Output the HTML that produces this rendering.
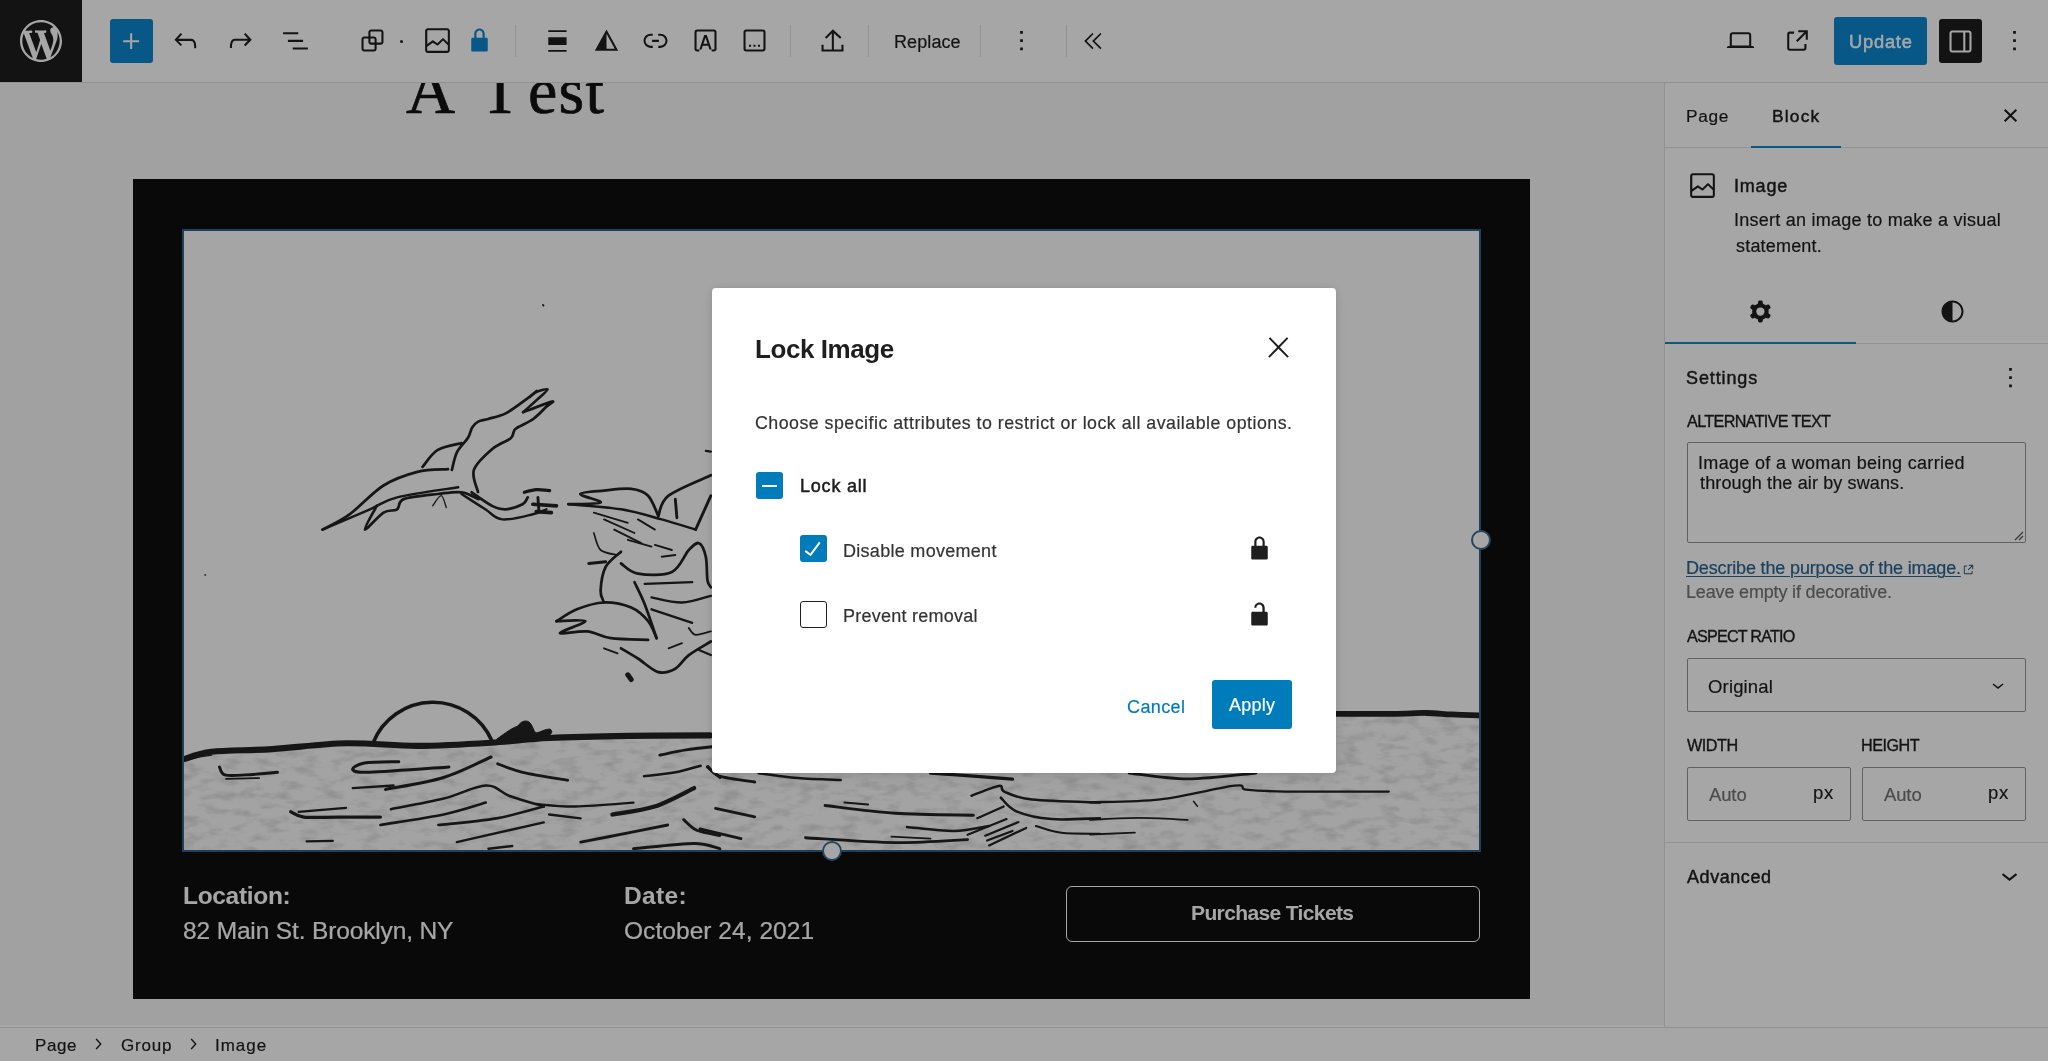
<!DOCTYPE html>
<html><head><meta charset="utf-8">
<style>
*{box-sizing:border-box;margin:0;padding:0}
html,body{width:2048px;height:1061px;overflow:hidden;background:#fff;-webkit-font-smoothing:antialiased;font-family:"Liberation Sans",sans-serif;color:#1e1e1e}
.a{position:absolute}
svg{display:block}
.ic{position:absolute;width:33px;height:33px}
.sep{position:absolute;top:25px;width:1px;height:32px;background:#e0e0e0}
.t{position:absolute;white-space:nowrap;line-height:1;will-change:transform}
#overlay{position:absolute;left:0;top:0;width:2048px;height:1061px;background:rgba(0,0,0,0.35)}
</style></head>
<body>
<div class="a" style="left:0;top:0;width:2048px;height:83px;background:#fff;border-bottom:1px solid #e0e0e0"><div class="a" style="left:0;top:0;width:82px;height:82px;background:#1e1e1e"><svg class="a" style="left:20px;top:20px" width="42" height="42" viewBox="0 0 20 20"><path fill="#fff" d="M20 10c0-5.51-4.49-10-10-10C4.48 0 0 4.490 0 10c0 5.52 4.48 10 10 10 5.51 0 10-4.48 10-10zM7.780 15.370L4.370 6.220c.55-.02 1.170-.08 1.170-.08.5-.06.44-1.130-.06-1.110 0 0-1.450.11-2.370.11-.18 0-.37 0-.58-.01C4.120 2.690 6.870 1.110 10 1.110c2.330 0 4.450.87 6.050 2.340-.68-.11-1.650.39-1.650 1.580 0 .74.45 1.360.9 2.100.35.61.55 1.360.55 2.460 0 1.490-1.400 5-1.400 5l-3.030-8.370c.54-.02.82-.17.82-.17.5-.05.44-1.250-.06-1.220 0 0-1.440.12-2.380.12-.87 0-2.330-.12-2.330-.12-.5-.03-.56 1.200-.06 1.220l.92.08 1.260 3.410zM17.410 10c.24-.64.74-1.870.43-4.250.7 1.290 1.050 2.710 1.050 4.250 0 3.290-1.730 6.240-4.400 7.780.97-2.590 1.940-5.200 2.920-7.780zM6.100 18.090C3.120 16.650 1.110 13.530 1.110 10c0-1.300.23-2.480.72-3.590C3.250 10.300 4.670 14.200 6.100 18.090zm4.030-6.630l2.580 6.980c-.86.29-1.760.45-2.710.45-.79 0-1.570-.11-2.290-.33.81-2.380 1.620-4.740 2.420-7.100z"/></svg></div>  <!-- plus -->
  <div class="a" style="left:110px;top:19px;width:43px;height:44px;background:#0c86cf;border-radius:3px">
    <svg class="a" style="left:5px;top:5.5px" width="33" height="33" viewBox="0 0 24 24"><path fill="#fff" d="M11 12.5V17.5H12.5V12.5H17.5V11H12.5V6H11V11H6V12.5H11Z"/></svg>
  </div>
  <svg class="ic" style="left:169px;top:24px" viewBox="0 0 24 24"><path fill="#1e1e1e" d="M18.3 11.7c-.6-.6-1.4-.9-2.3-.9H6.7l2.9-3.3-1.1-1-4.5 5L8.5 16l1-1-2.7-2.7H16c.5 0 .9.2 1.3.5 1 1 1 3.4 1 4.5v.3h1.5v-.2c0-1.5 0-4.3-1.5-5.7z"/></svg>
  <svg class="ic" style="left:224px;top:24px" viewBox="0 0 24 24"><path fill="#1e1e1e" d="M15.6 6.5l-1.1 1 2.9 3.3H8c-.9 0-1.7.3-2.3.9-1.4 1.5-1.4 4.2-1.4 5.6v.2h1.5v-.3c0-1.1 0-3.5 1-4.5.3-.3.7-.5 1.300-.5h9.2L14.5 15l1.1 1.1 4.6-4.6-4.6-5z"/></svg>
  <svg class="ic" style="left:279px;top:24px" viewBox="0 0 24 24"><path fill="#1e1e1e" d="M3 6h11v1.5H3V6Zm3.5 5.5h11V13h-11v-1.5ZM21 17H10v1.5h11V17Z"/></svg>
  <!-- group parent -->
  <svg class="ic" style="left:356px;top:24px" viewBox="0 0 24 24"><path fill="#1e1e1e" d="M18 4h-7c-1.1 0-2 .9-2 2v3H6c-1.1 0-2 .9-2 2v7c0 1.1.9 2 2 2h7c1.1 0 2-.9 2-2v-3h3c1.1 0 2-.9 2-2V6c0-1.1-.9-2-2-2zm-4.5 14c0 .3-.2.5-.5.5H6c-.3 0-.5-.2-.5-.5v-7c0-.3.2-.5.5-.5h3V13c0 1.1.9 2 2 2h2.5v3zm0-4.5H11c-.3 0-.5-.2-.5-.5v-2.5H13c.3 0 .5.2.5.5v2.5zm5-.5c0 .3-.2.5-.5.5h-3V11c0-1.1-.9-2-2-2h-2.5V6c0-.3.2-.5.5-.5h7c.3 0 .5.2.5.5v7z"/></svg>
  <div class="a" style="left:400px;top:40px;width:3px;height:3px;border-radius:50%;background:#1e1e1e"></div>
  <svg class="ic" style="left:421px;top:24px" viewBox="0 0 24 24"><path fill="#1e1e1e" d="M19 3H5c-1.100 0-2 .9-2 2v14c0 1.100.9 2 2 2h14c1.100 0 2-.9 2-2V5c0-1.100-.9-2-2-2zM5 4.5h14c.3 0 .5.2.5.5v8.4l-3-2.9c-.3-.3-.8-.3-1 0L11.9 14 9 12c-.3-.2-.6-.2-.8 0l-3.6 2.6V5c-.1-.3.1-.5.4-.5zm14 15H5c-.3 0-.5-.2-.5-.5v-2.4l4.1-3 3 1.9c.3.2.7.2.9-.1L16 12l3.5 3.4V19c0 .3-.2.5-.5.5z"/></svg>
  <svg class="ic" style="left:463px;top:24px" viewBox="0 0 24 24"><path fill="#0c86cf" d="M17 10h-1.2V7c0-2.1-1.7-3.8-3.8-3.8-2.1 0-3.8 1.7-3.8 3.8v3H7c-.6 0-1 .4-1 1v8c0 .6.4 1 1 1h10c.6 0 1-.4 1-1v-8c0-.6-.4-1-1-1zm-2.8 0H9.8V7c0-1.2 1-2.2 2.2-2.2s2.2 1 2.2 2.2v3z"/></svg>
  <div class="sep" style="left:515px"></div>
  <!-- align -->
  <svg class="ic" style="left:541px;top:24px" viewBox="0 0 24 24"><path fill="#1e1e1e" d="M5.3 4.5h13.3v1.3H5.3zM5.3 9.7h13.3v5.6H5.3zM5.3 18.9h13.3v1.3H5.3z"/></svg>
  <!-- duotone -->
  <svg class="ic" style="left:590px;top:24px" viewBox="0 0 24 24"><path fill="#1e1e1e" d="M12 4 3.5 19.5h17Zm0 3.1 6 10.9h-6Z" fill-rule="evenodd"/></svg>
  <!-- link -->
  <svg class="ic" style="left:639px;top:24px" viewBox="0 0 24 24"><path fill="#1e1e1e" d="M10 17.389H8.444A5.194 5.194 0 1 1 8.444 7H10v1.5H8.444a3.694 3.694 0 0 0 0 7.389H10v1.5ZM14 7h1.556a5.194 5.194 0 0 1 0 10.39H14v-1.5h1.556a3.694 3.694 0 0 0 0-7.39H14V7Zm-4.5 6h5v-1.5h-5V13Z"/></svg>
  <!-- text overlay -->
  <svg class="ic" style="left:689px;top:24px" viewBox="0 0 24 24"><path fill="#1e1e1e" d="M6 4h12a2 2 0 0 1 2 2v12a2 2 0 0 1-2 2h-1.5v-1.5H18a.5.5 0 0 0 .5-.5V6a.5.5 0 0 0-.5-.5H6a.5.5 0 0 0-.5.5v12c0 .3.2.5.5.5h1.5V20H6a2 2 0 0 1-2-2V6a2 2 0 0 1 2-2Zm5.1 4h1.8l3.6 10.5h-1.6l-.9-2.7H10l-.9 2.7H7.5Zm.9 2-1.5 4.4h3Z"/></svg>
  <!-- caption -->
  <svg class="ic" style="left:738px;top:24px" viewBox="0 0 24 24"><path fill="#1e1e1e" d="M6 4h12a2 2 0 0 1 2 2v12a2 2 0 0 1-2 2H6a2 2 0 0 1-2-2V6a2 2 0 0 1 2-2Zm0 1.5a.5.5 0 0 0-.5.5v12c0 .3.2.5.5.5h12a.5.5 0 0 0 .5-.5V6a.5.5 0 0 0-.5-.5ZM8 15h1.5v1.5H8Zm3.25 0h1.5v1.5h-1.5Zm3.25 0H16v1.5h-1.5Z"/></svg>
  <div class="sep" style="left:790px"></div>
  <!-- upload -->
  <svg class="ic" style="left:816px;top:24px" viewBox="0 0 24 24"><path fill="#1e1e1e" d="M18.5 15v3.5H13V6.7l4.5 4.1 1-1.1-6.2-5.8-5.8 5.8 1 1.1 4-4v11.7h-6V15H4v5h16v-5z"/></svg>
  <div class="sep" style="left:868px"></div>
  <div class="sep" style="left:980px"></div>
  <svg class="ic" style="left:1005px;top:24px" viewBox="0 0 24 24"><path fill="#1e1e1e" d="M13 19h-2v-2h2v2zm0-6h-2v-2h2v2zm0-6h-2V5h2v2z"/></svg>
  <div class="sep" style="left:1066px"></div>
  <svg class="ic" style="left:1077px;top:24px" viewBox="0 0 24 24"><path fill="none" stroke="#1e1e1e" stroke-width="1.25" d="M11.6 6.9 6.1 12.4l5.5 5.5M17.4 6.9 11.9 12.4l5.5 5.5"/></svg>

  <!-- right side -->
  <svg class="ic" style="left:1724px;top:24px" viewBox="0 0 24 24"><path fill="#1e1e1e" d="M20.5 16h-.7V8c0-1.100-.9-2-2-2H6.200c-1.100 0-2 .9-2 2v8h-.7c-.8 0-1.500.7-1.500 1.500h20c0-.8-.7-1.500-1.500-1.500zM5.700 8c0-.3.2-.5.5-.5h11.600c.3 0 .5.2.5.5v7.600H5.700V8z"/></svg>
  <svg class="ic" style="left:1781px;top:24px" viewBox="0 0 24 24"><path fill="#1e1e1e" d="M19.5 4.5h-7V6h4.44l-5.97 5.97 1.06 1.06L18 7.06v4.44h1.5v-7Zm-13 1a2 2 0 0 0-2 2v10a2 2 0 0 0 2 2h10a2 2 0 0 0 2-2v-3H17v3a.5.5 0 0 1-.5.5h-10a.5.5 0 0 1-.5-.5v-10a.5.5 0 0 1 .5-.5h3V5.5h-3Z"/></svg>
  <div class="a" style="left:1834px;top:17px;width:93px;height:48px;background:#0c86cf;border-radius:3px"></div>
  <div class="a" style="left:1939px;top:19px;width:43px;height:44px;background:#1e1e1e;border-radius:3px">
    <svg class="a" style="left:5px;top:5.5px" width="33" height="33" viewBox="0 0 24 24"><path fill="#fff" d="M18 4H6c-1.100 0-2 .9-2 2v12c0 1.100.9 2 2 2h12c1.100 0 2-.9 2-2V6c0-1.100-.9-2-2-2zm-4 14.5H6c-.3 0-.5-.2-.5-.5V6c0-.3.2-.5.5-.5h8v13zm4.500-.5c0 .3-.2.5-.5.5h-2.500v-13H18c.3 0 .5.2.5.5v12z"/></svg>
  </div>
  <svg class="ic" style="left:1998px;top:24px" viewBox="0 0 24 24"><path fill="#1e1e1e" d="M13 19h-2v-2h2v2zm0-6h-2v-2h2v2zm0-6h-2V5h2v2z"/></svg>
<div class="t" style="left:893.56px;top:32.96px;font-size:18.00px;letter-spacing:0.092px;color:#1e1e1e;-webkit-text-stroke:0.20px #1e1e1e">Replace</div><div class="t" style="left:1848.72px;top:33.41px;font-size:18.30px;letter-spacing:0.786px;color:#fff;-webkit-text-stroke:0.50px #fff">Update</div></div>
<div class="a" style="left:0;top:83px;width:1664px;height:942px;background:#f8f8f8;overflow:hidden"><div class="t" style="left:406px;top:-27px;font-family:'Liberation Serif',serif;font-size:68px;color:#111;-webkit-text-stroke:0.7px #111">A</div><div class="t" style="left:480px;top:-25.3px;font-family:'Liberation Serif',serif;font-size:66px;color:#111;-webkit-text-stroke:0.7px #111">T</div><div class="t" style="left:528px;top:-25.3px;font-family:'Liberation Serif',serif;font-size:66px;color:#111;-webkit-text-stroke:0.7px #111;letter-spacing:1.2px">est</div></div><div class="a" style="left:133px;top:179px;width:1397px;height:820px;background:#0f0f0f"></div><div class="a" style="left:184px;top:231px;width:1295px;height:619px;outline:2px solid #2a6490;overflow:hidden"><svg class="a" style="left:-1px;top:-1px" width="1297" height="621" viewBox="183 230 1297 621"><rect x="183" y="230" width="1297" height="621" fill="#fefefe"/><defs><filter id="nz" x="0" y="0" width="100%" height="100%"><feTurbulence type="fractalNoise" baseFrequency="0.05 0.12" numOctaves="3" seed="7"/><feColorMatrix values="0 0 0 0 0  0 0 0 0 0  0 0 0 0 0  0 0 0 -0.3 0.16"/></filter></defs><path d="M183 758 C260 748 330 745 346 743 C420 748 500 745 560 740 C650 737 720 735 900 730 L1336 714 L1480 716 L1480 851 L183 851Z" fill="#fafafa"/><rect x="183" y="712" width="1297" height="140" filter="url(#nz)" clip-path="url(#oc)"/><clipPath id="oc"><path d="M183 758 C260 748 330 745 346 743 C420 748 500 745 560 740 C650 737 720 735 900 730 L1336 714 L1480 716 L1480 851 L183 851Z"/></clipPath><g fill="none" stroke="#222" stroke-linecap="round" stroke-linejoin="round"><path d="M451.9 469.9C452.8 466.9 454.3 457.5 457.0 452.1C459.7 446.7 465.5 441.8 468.0 437.7C470.5 433.6 470.5 430.2 472.2 427.5C473.9 424.8 475.5 423.0 478.2 421.6C480.9 420.2 483.6 420.4 488.3 419.0C493.0 417.6 500.1 416.2 506.2 413.1C512.3 410.0 519.7 404.1 524.8 400.4C529.9 396.7 534.7 392.6 536.7 391.0" stroke-width="2.74"/>
<path d="M529.9 397.0C531.0 396.1 533.7 393.2 536.7 391.9C539.7 390.6 547.1 388.4 547.7 389.3C548.3 390.2 544.2 393.2 540.1 397.0C536.0 400.8 525.9 409.7 523.1 412.2" stroke-width="2.46"/>
<path d="M523.1 412.2C527.9 410.4 548.2 402.5 552.0 401.6C555.8 400.8 549.1 404.2 546.0 407.1C542.9 410.0 538.2 415.5 533.3 419.0C528.3 422.5 519.5 426.2 516.3 428.3C513.0 430.4 514.8 430.0 513.8 431.7C512.8 433.4 513.9 435.7 510.4 438.5C506.9 441.3 498.7 443.5 492.6 448.7C486.5 453.9 476.3 462.7 473.9 469.9C471.5 477.1 477.3 488.3 478.0 492.0" stroke-width="2.74"/>
<path d="M422.5 466.9C425.1 464.0 431.3 453.8 437.8 449.9C444.3 445.9 457.6 444.2 461.5 443.1" stroke-width="2.74"/>
<path d="M322.5 529.6C327.0 527.1 339.4 521.7 349.6 514.3C359.8 507.0 372.2 492.6 383.5 485.5C394.8 478.4 406.7 474.7 417.4 471.9C428.2 469.2 442.9 469.7 448.0 469.2" stroke-width="2.74"/>
<path d="M322.5 529.6C330.4 526.2 357.5 514.6 370.0 509.3C382.4 503.9 382.4 501.1 397.1 497.4C411.8 493.7 448.0 488.9 458.2 487.2" stroke-width="2.46"/>
<path d="M376.7 505.9C374.8 509.8 363.7 528.5 364.9 529.6C366.0 530.7 378.2 516.0 383.5 512.6C388.9 509.3 393.7 511.5 397.1 509.3C400.5 507.0 397.1 501.6 403.9 499.1C410.7 496.5 428.2 495.1 437.8 494.0C447.4 492.9 454.8 491.4 461.5 492.3C468.3 493.1 475.7 497.9 478.5 499.1" stroke-width="2.74"/>
<path d="M471.7 492.3C475.1 494.6 486.4 503.0 492.1 505.9C497.7 508.7 500.6 509.5 505.6 509.3C510.7 509.0 518.9 506.1 522.6 504.2C526.3 502.2 526.8 498.5 527.7 497.4" stroke-width="2.74"/>
<path d="M461.5 494.0C465.5 496.5 478.5 505.0 485.3 509.3C492.1 513.5 494.3 518.6 502.3 519.4C510.2 520.3 525.4 516.0 532.8 514.3C540.1 512.6 544.1 510.1 546.4 509.3" stroke-width="2.46"/>
<path d="M524.3 492.3C526.3 491.8 531.9 489.9 536.2 489.6C540.4 489.3 547.5 490.4 549.7 490.6" stroke-width="3.24"/>
<path d="M532.8 504.2L556.5 505.9" stroke-width="3.60"/>
<path d="M536.2 511.6L551.4 512.6" stroke-width="3.60"/>
<path d="M537.9 497.4L538.9 510.9" stroke-width="2.88"/>
<path d="M432.7 505.9C434.1 504.2 438.9 495.4 441.2 495.7C443.5 496.0 445.4 505.6 446.3 507.6" stroke-width="1.30"/>
<path d="M568.4 504.2C573.8 503.9 598.6 504.2 600.6 502.5C602.6 500.8 579.7 496.0 580.3 494.0C580.8 492.0 595.5 491.4 604.0 490.6C612.5 489.7 623.8 488.1 631.2 488.9C638.5 489.7 643.6 491.2 648.1 495.7C652.6 500.2 656.6 512.6 658.3 516.0" stroke-width="2.74"/>
<path d="M568.4 504.2C577.2 505.0 605.4 506.7 621.0 509.3C636.5 511.8 649.2 516.0 661.7 519.4C674.1 522.8 690.0 527.9 695.6 529.6" stroke-width="2.46"/>
<path d="M658.3 516.0C660.0 512.6 659.7 502.5 668.5 495.7C677.2 488.9 703.8 478.7 710.9 475.3" stroke-width="2.74"/>
<path d="M675.3 499.1L676.9 517.7" stroke-width="2.88"/>
<path d="M695.6 529.6L710.9 495.7" stroke-width="2.88"/>
<path d="M593.8 512.6L627.8 522.8" stroke-width="1.87"/>
<path d="M604.0 519.4L634.5 533.0" stroke-width="1.87"/>
<path d="M614.2 529.6L641.3 543.2" stroke-width="1.87"/>
<path d="M627.8 539.8L651.5 546.6" stroke-width="1.87"/>
<path d="M637.9 519.4L654.9 529.6" stroke-width="1.87"/>
<path d="M654.9 544.9L671.9 550.0" stroke-width="1.87"/>
<path d="M661.7 556.7L675.3 555.0" stroke-width="1.87"/>
<path d="M593.8 533.0C595.0 535.8 596.7 546.3 600.6 550.0C604.6 553.6 614.8 554.2 617.6 555.0" stroke-width="1.73"/>
<path d="M588.8 563.5L605.7 561.8" stroke-width="2.88"/>
<path d="M621.0 551.7C618.4 554.2 609.1 560.4 605.7 566.9C602.3 573.4 600.9 584.7 600.6 590.7C600.3 596.6 603.5 600.6 604.0 602.5" stroke-width="2.74"/>
<path d="M621.0 563.5C623.8 565.2 629.5 572.3 637.9 573.7C646.4 575.1 663.4 576.0 671.9 572.0C680.3 568.1 684.3 554.8 688.8 550.0C693.3 545.2 696.2 542.0 699.0 543.2C701.8 544.3 704.4 550.5 705.8 556.7C707.2 563.0 706.6 575.4 707.5 580.5C708.3 585.6 710.3 586.1 710.9 587.3" stroke-width="2.74"/>
<path d="M634.5 582.2C636.2 585.9 641.0 594.9 644.7 604.2C648.4 613.6 654.6 632.5 656.6 638.2" stroke-width="2.74"/>
<path d="M644.7 583.9L692.2 582.2" stroke-width="2.30"/>
<path d="M651.5 597.4C656.6 598.3 672.1 602.8 682.0 602.5C691.9 602.3 706.1 596.9 710.9 595.8" stroke-width="2.30"/>
<path d="M651.5 609.3L692.2 622.9" stroke-width="2.30"/>
<path d="M556.5 621.2C559.9 619.2 569.0 612.4 576.9 609.3C584.8 606.2 595.0 602.8 604.0 602.5C613.1 602.3 623.8 604.5 631.2 607.6C638.5 610.7 643.9 616.1 648.1 621.2C652.4 626.3 655.2 635.3 656.6 638.2" stroke-width="2.74"/>
<path d="M556.5 621.2C561.3 621.2 584.8 619.2 585.4 621.2C585.9 623.2 559.6 631.4 559.9 633.1C560.2 634.8 578.6 630.5 587.1 631.4C595.5 632.2 600.6 636.7 610.8 638.2C621.0 639.6 641.9 639.6 648.1 639.9" stroke-width="2.74"/>
<path d="M621.0 648.3C623.8 650.0 631.7 654.5 637.9 658.5C644.2 662.5 652.1 670.4 658.3 672.1C664.5 673.8 670.2 671.5 675.3 668.7C680.3 665.9 682.9 659.6 688.8 655.1C694.8 650.6 707.2 643.8 710.9 641.5" stroke-width="2.74"/>
<path d="M668.5 648.3L682.0 643.2" stroke-width="1.80"/>
<path d="M604.0 648.3L617.6 653.4" stroke-width="1.80"/>
<path d="M627.8 674.8L631.2 679.5" stroke-width="5.04"/>
<path d="M688.8 628.0C690.0 629.1 691.9 634.2 695.6 634.8C699.3 635.3 708.3 631.9 710.9 631.4" stroke-width="1.87"/>
<path d="M699.0 650.0L710.9 655.1" stroke-width="2.16"/>
<path d="M705.8 450.9L710.9 451.6" stroke-width="2.16"/>
<path d="M184.0 759.1C188.6 757.9 196.9 753.4 211.6 751.7C226.4 750.0 249.9 750.5 272.3 749.1C294.7 747.7 321.9 743.8 346.1 743.3C370.3 742.7 393.1 746.0 417.3 745.9C441.4 745.8 469.1 744.1 491.1 742.7C513.1 741.4 526.3 739.1 549.1 738.0C572.0 736.9 601.4 736.3 628.2 735.9C655.0 735.5 696.3 735.5 709.9 735.4" stroke-width="6.12"/>
<path d="M184.0 761.2C185.9 760.6 191.2 758.8 195.8 757.8C200.4 756.8 209.0 755.6 211.6 755.1" stroke-width="1.44"/>
<path d="M373 743A64.4 64.4 0 0 1 492 741" stroke-width="3.60"/>
<path d="M219.5 767.0C220.4 768.3 220.4 773.6 224.8 774.9C229.2 776.2 237.1 775.4 245.9 774.9C254.7 774.5 272.3 772.7 277.5 772.3" stroke-width="2.88"/>
<path d="M226.1 778.9L259.1 778.1" stroke-width="1.80"/>
<path d="M398.8 761.7C393.1 761.9 372.2 761.7 364.6 763.0C356.9 764.4 351.8 768.1 352.7 769.6C353.6 771.2 353.8 772.7 369.8 772.3C385.9 771.8 435.7 767.9 448.9 767.0" stroke-width="3.02"/>
<path d="M385.6 789.4C395.3 787.4 426.1 783.0 443.6 777.5C461.2 772.1 483.2 760.4 491.1 757.0" stroke-width="3.02"/>
<path d="M352.7 788.1L393.6 785.5" stroke-width="2.30"/>
<path d="M497.7 763.8C501.9 765.2 511.1 769.6 522.7 772.3C534.4 775.0 560.1 778.9 567.6 780.2" stroke-width="2.88"/>
<path d="M290.7 811.8C292.9 812.7 296.0 816.2 303.9 817.1C311.8 818.0 325.4 817.1 338.2 817.1C350.9 817.1 373.3 817.1 380.4 817.1" stroke-width="3.24"/>
<path d="M298.6 811.8L346.1 807.9" stroke-width="2.16"/>
<path d="M390.9 809.2C399.7 807.4 427.8 802.6 443.6 798.6C459.5 794.7 474.8 785.9 485.8 785.5C496.8 785.0 499.9 792.5 509.6 796.0C519.2 799.5 538.1 804.8 543.8 806.5" stroke-width="2.59"/>
<path d="M380.4 825.0C390.9 823.2 426.1 818.2 443.6 814.5C461.2 810.7 478.8 804.6 485.8 802.6" stroke-width="2.59"/>
<path d="M438.4 825.0C448.0 823.9 478.8 821.5 496.4 818.4C513.9 815.3 535.9 808.5 543.8 806.5" stroke-width="2.59"/>
<path d="M535.9 803.9C542.5 804.4 559.2 806.8 575.5 806.5C591.7 806.3 623.8 803.3 633.5 802.6" stroke-width="2.30"/>
<path d="M549.1 814.5L580.7 818.4" stroke-width="2.30"/>
<path d="M612.4 814.5C619.4 813.1 640.9 810.9 654.6 806.5C668.2 802.2 687.5 791.2 694.1 788.1" stroke-width="4.32"/>
<path d="M580.7 842.1C588.6 840.6 613.7 835.8 628.2 832.9C642.7 830.1 661.1 826.3 667.7 825.0" stroke-width="2.88"/>
<path d="M683.6 819.7C685.8 821.5 690.7 827.6 696.7 830.3C702.8 832.9 716.1 834.7 719.9 835.5" stroke-width="2.88"/>
<path d="M306.5 841.3L332.9 840.8" stroke-width="2.16"/>
<path d="M456.8 842.1L543.8 822.4" stroke-width="2.30"/>
<path d="M488.5 848.7L512.2 846.1" stroke-width="2.52"/>
<path d="M633.5 848.7C643.6 847.9 679.7 843.5 694.1 843.5C708.5 843.5 715.6 847.9 719.9 848.7" stroke-width="2.88"/>
<path d="M644.0 776.2C649.3 775.6 666.2 774.0 675.6 772.3C685.1 770.5 696.5 766.8 700.7 765.7" stroke-width="2.52"/>
<path d="M659.8 755.1C664.2 754.3 676.2 751.4 686.2 749.9C696.2 748.3 714.3 746.6 719.9 745.9" stroke-width="2.88"/>
<path d="M707.3 767.0L719.9 777.5" stroke-width="2.88"/>
<path d="M707.8 766.4C709.8 768.0 711.7 773.6 719.5 776.2C727.3 778.8 748.8 781.1 754.7 782.0" stroke-width="2.88"/>
<path d="M758.6 773.2C765.1 774.1 784.0 777.0 797.7 778.1C811.3 779.3 833.5 779.8 840.6 780.1" stroke-width="2.52"/>
<path d="M930.5 773.2C937.6 773.7 959.8 775.2 973.4 776.2C987.1 777.1 1006.0 778.6 1012.5 779.1" stroke-width="3.24"/>
<path d="M971.5 795.7C976.0 794.1 993.3 786.6 998.8 785.9C1004.4 785.3 999.2 789.5 1004.7 791.8C1010.2 794.1 1016.1 797.8 1032.0 799.6C1047.9 801.4 1088.7 802.1 1100.0 802.5" stroke-width="2.52"/>
<path d="M715.6 808.4L754.7 816.8" stroke-width="2.88"/>
<path d="M825.0 805.5C836.7 806.8 870.6 811.7 895.3 813.3C920.1 814.9 960.4 814.9 973.4 815.2" stroke-width="2.88"/>
<path d="M844.5 802.5L868.0 804.5" stroke-width="2.16"/>
<path d="M977.3 818.2L1003.7 806.4" stroke-width="2.16"/>
<path d="M1000.8 797.7C1003.4 799.9 1007.9 807.7 1016.4 811.3C1024.9 814.9 1037.6 818.0 1051.6 819.1C1065.5 820.3 1091.9 818.3 1100.0 818.2" stroke-width="2.52"/>
<path d="M907.0 827.0C914.8 827.6 940.2 831.0 953.9 830.9C967.6 830.7 983.2 826.8 989.1 826.0" stroke-width="2.52"/>
<path d="M967.6 834.8L1006.6 819.1" stroke-width="2.16"/>
<path d="M985.2 835.7L1018.4 822.1" stroke-width="2.16"/>
<path d="M987.1 840.6L1012.5 830.9" stroke-width="2.16"/>
<path d="M989.1 845.5L1026.2 827.9" stroke-width="2.16"/>
<path d="M1035.9 826.0C1040.2 827.1 1050.7 831.5 1061.3 832.8C1072.0 834.1 1093.6 833.6 1100.0 833.8" stroke-width="2.16"/>
<path d="M700.0 828.9L741.0 838.7" stroke-width="2.88"/>
<path d="M805.5 837.7C820.4 838.5 868.3 842.3 895.3 842.6C922.3 842.9 955.5 840.1 967.6 839.6" stroke-width="2.88"/>
<path d="M891.4 836.7L930.5 838.7" stroke-width="1.80"/>
<path d="M1336.1 713.8C1345.5 713.8 1377.8 714.0 1392.7 713.8C1407.7 713.7 1416.2 712.9 1425.9 713.0C1435.7 713.1 1442.5 714.0 1451.3 714.4C1460.1 714.8 1474.1 715.2 1478.7 715.4" stroke-width="5.76"/>
<path d="M1129.1 773.0C1138.8 774.0 1166.5 778.9 1187.7 778.9C1208.8 778.9 1244.6 774.0 1256.0 773.0" stroke-width="2.88"/>
<path d="M1090.0 802.3C1101.7 801.8 1136.2 802.1 1160.3 799.4C1184.4 796.6 1220.2 787.3 1234.5 785.7C1248.9 784.1 1237.8 788.6 1246.2 789.6C1254.7 790.6 1261.5 791.2 1285.3 791.6C1309.1 791.9 1371.6 791.6 1388.8 791.6" stroke-width="2.30"/>
<path d="M1090.0 819.9C1098.1 819.6 1122.6 817.9 1138.8 817.9C1155.1 817.9 1179.5 819.6 1187.7 819.9" stroke-width="1.87"/>
<path d="M1090.0 834.5L1134.9 832.6" stroke-width="1.87"/>
<path d="M1193.5 801.3L1197.4 806.2" stroke-width="1.44"/>
<path d="M543 305l0.5 0.5" stroke-width="1.80"/>
<path d="M205 575l0.5 0" stroke-width="1.44"/>
<path d="M497 739C505 733 512 728 518 726C521 721 526 720 529 722C533 725 533 731 536 733C541 732 545 729 550 729C553 731 552 734 548 736C535 738 515 739 497 740Z" fill="#222" stroke-width="1"/></g></svg></div><div class="a" style="left:822px;top:841px;width:20px;height:20px;border-radius:50%;background:#fff;border:2.2px solid #3a6a90"></div><div class="a" style="left:1471px;top:530px;width:20px;height:20px;border-radius:50%;background:#fff;border:2.2px solid #3a6a90"></div><div class="t" style="left:182.53px;top:883.86px;font-size:24.50px;letter-spacing:-0.311px;color:#fff;font-weight:bold">Location:</div><div class="t" style="left:183.02px;top:919.16px;font-size:24.50px;letter-spacing:-0.144px;color:#fff;-webkit-text-stroke:0.20px #fff">82 Main St. Brooklyn, NY</div><div class="t" style="left:623.53px;top:883.86px;font-size:24.50px;letter-spacing:0.372px;color:#fff;font-weight:bold">Date:</div><div class="t" style="left:624.02px;top:919.16px;font-size:24.50px;letter-spacing:0.052px;color:#fff;-webkit-text-stroke:0.20px #fff">October 24, 2021</div><div class="a" style="left:1066px;top:885.5px;width:414px;height:56px;border:1.6px solid #fff;border-radius:6px"></div><div class="t" style="left:1190.74px;top:901.62px;font-size:21.00px;letter-spacing:-0.624px;color:#fff;font-weight:bold">Purchase Tickets</div>
<div class="a" style="left:1664px;top:83px;width:384px;height:945px;background:#fff;border-left:1px solid #e0e0e0"></div><div class="a" style="left:1665px;top:147px;width:383px;height:1px;background:#e0e0e0"></div><div class="t" style="left:1686.12px;top:107.96px;font-size:17.30px;letter-spacing:0.702px;color:#1e1e1e;-webkit-text-stroke:0.20px #1e1e1e">Page</div><div class="t" style="left:1771.62px;top:107.96px;font-size:17.30px;letter-spacing:1.227px;color:#1e1e1e;-webkit-text-stroke:0.45px #1e1e1e">Block</div><div class="a" style="left:1751px;top:146px;width:90px;height:2px;background:#0c86cf"></div><svg class="a" style="left:1993.5px;top:98.5px" width="33" height="33" viewBox="0 0 24 24"><path fill="#1e1e1e" d="M12 13.06l3.712 3.713 1.061-1.06L13.061 12l3.712-3.712-1.06-1.06L12 10.938 8.288 7.227l-1.061 1.06L10.939 12l-3.712 3.712 1.06 1.061L12 13.061z"/></svg><svg class="a" style="left:1686.0px;top:168.5px" width="33" height="33" viewBox="0 0 24 24"><path fill="#1e1e1e" d="M19 3H5c-1.1 0-2 .9-2 2v14c0 1.1.9 2 2 2h14c1.1 0 2-.9 2-2V5c0-1.1-.9-2-2-2zM5 4.5h14c.3 0 .5.2.5.5v8.4l-3-2.9c-.3-.3-.8-.3-1 0L11.9 14 9 12c-.3-.2-.6-.2-.8 0l-3.6 2.6V5c-.1-.3.1-.5.4-.5zm14 15H5c-.3 0-.5-.2-.5-.5v-2.4l4.1-3 3 1.9c.3.2.7.2.9-.1L16 12l3.5 3.4V19c0 .3-.2.5-.5.5z"/></svg><div class="t" style="left:1734.38px;top:176.86px;font-size:18.00px;letter-spacing:0.811px;color:#1e1e1e;-webkit-text-stroke:0.45px #1e1e1e">Image</div><div class="t" style="left:1734.38px;top:211.16px;font-size:18.00px;letter-spacing:0.246px;color:#1e1e1e;-webkit-text-stroke:0.20px #1e1e1e">Insert an image to make a visual</div><div class="t" style="left:1735.64px;top:236.66px;font-size:18.00px;letter-spacing:0.190px;color:#1e1e1e;-webkit-text-stroke:0.20px #1e1e1e">statement.</div><svg class="a" style="left:1744px;top:295px" width="33" height="33" viewBox="0 0 24 24"><path fill="#1e1e1e" fill-rule="evenodd" clip-rule="evenodd" d="M10.289 4.836A1 1 0 0111.275 4h1.306a1 1 0 01.987.836l.244 1.466c.787.26 1.503.679 2.108 1.218l1.393-.522a1 1 0 011.216.437l.653 1.13a1 1 0 01-.23 1.273l-1.148.944a6.025 6.025 0 010 2.435l1.149.946a1 1 0 01.23 1.272l-.653 1.13a1 1 0 01-1.216.437l-1.394-.522c-.605.54-1.32.958-2.108 1.218l-.244 1.466a1 1 0 01-.987.836h-1.306a1 1 0 01-.986-.836l-.244-1.466a5.995 5.995 0 01-2.108-1.218l-1.394.522a1 1 0 01-1.217-.436l-.653-1.131a1 1 0 01.23-1.272l1.149-.946a6.026 6.026 0 010-2.435l-1.148-.944a1 1 0 01-.23-1.272l.653-1.131a1 1 0 011.217-.437l1.393.522a5.994 5.994 0 012.108-1.218l.244-1.466zM14.929 12a3 3 0 11-6 0 3 3 0 016 0z"/></svg><svg class="a" style="left:1936.0px;top:295.0px" width="33" height="33" viewBox="0 0 24 24"><path fill="#1e1e1e" d="M12 4c-4.4 0-8 3.6-8 8s3.6 8 8 8 8-3.6 8-8-3.6-8-8-8zm0 14.5V5.5c3.6 0 6.5 2.9 6.5 6.5s-2.9 6.5-6.5 6.5z"/></svg><div class="a" style="left:1665px;top:343px;width:383px;height:1px;background:#e0e0e0"></div><div class="a" style="left:1665px;top:342px;width:191px;height:2px;background:#0c86cf"></div><div class="t" style="left:1686.28px;top:368.96px;font-size:18.00px;letter-spacing:0.889px;color:#1e1e1e;-webkit-text-stroke:0.45px #1e1e1e">Settings</div><svg class="a" style="left:1993.5px;top:360.5px" width="33" height="33" viewBox="0 0 24 24"><path fill="#1e1e1e" d="M13 19h-2v-2h2v2zm0-6h-2v-2h2v2zm0-6h-2V5h2v2z"/></svg><div class="t" style="left:1687.00px;top:412.69px;font-size:16.20px;letter-spacing:-0.659px;color:#1e1e1e;-webkit-text-stroke:0.35px #1e1e1e">ALTERNATIVE TEXT</div><div class="a" style="left:1687px;top:442px;width:339px;height:101px;border:1px solid #949494;border-radius:2px"></div><svg class="a" style="left:2012px;top:529px" width="12" height="12" viewBox="0 0 12 12"><path d="M11 3 3 11M11 7 7 11" stroke="#555" stroke-width="1.2"/></svg><div class="t" style="left:1698.38px;top:453.96px;font-size:18.00px;letter-spacing:0.327px;color:#1e1e1e;-webkit-text-stroke:0.20px #1e1e1e">Image of a woman being carried</div><div class="t" style="left:1699.82px;top:474.36px;font-size:18.00px;letter-spacing:0.130px;color:#1e1e1e;-webkit-text-stroke:0.20px #1e1e1e">through the air by swans.</div><div class="t" style="left:1685.56px;top:558.86px;font-size:18.00px;letter-spacing:-0.156px;color:#2a6590;-webkit-text-stroke:0.20px #2a6590;text-decoration:underline;text-underline-offset:2px;text-decoration-thickness:1.3px">Describe the purpose of the image.</div><svg class="a" style="left:1961px;top:561.5px" width="15" height="15" viewBox="0 0 24 24"><path fill="#2a5070" d="M19.5 4.5h-7V6h4.44l-5.97 5.97 1.06 1.06L18 7.06v4.44h1.5v-7Zm-13 1a2 2 0 0 0-2 2v10a2 2 0 0 0 2 2h10a2 2 0 0 0 2-2v-3H17v3a.5.5 0 0 1-.5.5h-10a.5.5 0 0 1-.5-.5v-10a.5.5 0 0 1 .5-.5h3V5.5h-3Z"/></svg><div class="t" style="left:1685.56px;top:582.96px;font-size:18.00px;letter-spacing:-0.164px;color:#757575;-webkit-text-stroke:0.20px #757575">Leave empty if decorative.</div><div class="t" style="left:1687.00px;top:627.69px;font-size:16.20px;letter-spacing:-0.804px;color:#1e1e1e;-webkit-text-stroke:0.35px #1e1e1e">ASPECT RATIO</div><div class="a" style="left:1687px;top:658px;width:339px;height:54px;border:1px solid #949494;border-radius:2px"></div><div class="t" style="left:1708.26px;top:677.64px;font-size:18.50px;letter-spacing:0.163px;color:#1e1e1e;-webkit-text-stroke:0.20px #1e1e1e">Original</div><svg class="a" style="left:1986.0px;top:673.0px" width="24" height="24" viewBox="0 0 24 24"><path fill="#1e1e1e" d="M17.5 11.6L12 16l-5.5-4.4.9-1.2L12 14l4.6-3.6 1 1.2z"/></svg><div class="t" style="left:1687.00px;top:736.79px;font-size:16.20px;letter-spacing:-0.479px;color:#1e1e1e;-webkit-text-stroke:0.35px #1e1e1e">WIDTH</div><div class="t" style="left:1860.70px;top:736.79px;font-size:16.20px;letter-spacing:-0.513px;color:#1e1e1e;-webkit-text-stroke:0.35px #1e1e1e">HEIGHT</div><div class="a" style="left:1687px;top:767px;width:164px;height:54px;border:1px solid #949494;border-radius:2px"></div><div class="a" style="left:1862px;top:767px;width:164px;height:54px;border:1px solid #949494;border-radius:2px"></div><div class="t" style="left:1709.00px;top:785.94px;font-size:18.50px;letter-spacing:-0.129px;color:#757575;-webkit-text-stroke:0.20px #757575">Auto</div><div class="t" style="left:1812.89px;top:783.74px;font-size:18.50px;letter-spacing:0.756px;color:#1e1e1e;-webkit-text-stroke:0.20px #1e1e1e">px</div><div class="t" style="left:1884.00px;top:785.94px;font-size:18.50px;letter-spacing:-0.129px;color:#757575;-webkit-text-stroke:0.20px #757575">Auto</div><div class="t" style="left:1987.89px;top:783.74px;font-size:18.50px;letter-spacing:0.756px;color:#1e1e1e;-webkit-text-stroke:0.20px #1e1e1e">px</div><div class="a" style="left:1665px;top:842px;width:383px;height:1px;background:#e0e0e0"></div><div class="t" style="left:1687.00px;top:867.66px;font-size:18.00px;letter-spacing:0.564px;color:#1e1e1e;-webkit-text-stroke:0.45px #1e1e1e">Advanced</div><svg class="a" style="left:1993.0px;top:858.8px" width="33" height="33" viewBox="0 0 24 24"><path fill="#1e1e1e" d="M17.5 11.6L12 16l-5.5-4.4.9-1.2L12 14l4.6-3.6 1 1.2z"/></svg>
<div class="a" style="left:0;top:1027px;width:2048px;height:34px;background:#fff;border-top:1px solid #e0e0e0"></div><div class="t" style="left:35.24px;top:1036.71px;font-size:17.00px;letter-spacing:0.557px;color:#1e1e1e;-webkit-text-stroke:0.20px #1e1e1e">Page</div><svg class="a" style="left:87.0px;top:1033.0px" width="22" height="22" viewBox="0 0 24 24"><path fill="#1e1e1e" d="M10.6 6L9.4 7l4.6 5-4.6 5 1.2 1 5.4-6z"/></svg><div class="t" style="left:120.75px;top:1036.71px;font-size:17.00px;letter-spacing:0.804px;color:#1e1e1e;-webkit-text-stroke:0.20px #1e1e1e">Group</div><svg class="a" style="left:182.0px;top:1033.0px" width="22" height="22" viewBox="0 0 24 24"><path fill="#1e1e1e" d="M10.6 6L9.4 7l4.6 5-4.6 5 1.2 1 5.4-6z"/></svg><div class="t" style="left:214.97px;top:1036.71px;font-size:17.00px;letter-spacing:0.974px;color:#1e1e1e;-webkit-text-stroke:0.20px #1e1e1e">Image</div>
<div id="overlay"></div>
<div class="a" style="left:712px;top:288px;width:624px;height:485px;background:#fff;border-radius:4px;box-shadow:0 0 10px rgba(0,0,0,.13),0 8px 20px rgba(0,0,0,.05)"></div><div class="t" style="left:755.44px;top:336.19px;font-size:26.00px;letter-spacing:-0.423px;color:#1e1e1e;font-weight:bold">Lock Image</div><svg class="a" style="left:1262.0px;top:331.0px" width="33" height="33" viewBox="0 0 24 24"><path fill="#1e1e1e" d="M13 11.8l6.1-6.3-1-1-6.1 6.2-6.1-6.2-1 1 6.1 6.3-6.5 6.7 1 1 6.5-6.6 6.5 6.6 1-1z"/></svg><div class="t" style="left:755.11px;top:415.13px;font-size:17.80px;letter-spacing:0.484px;color:#333333;-webkit-text-stroke:0.20px #333333">Choose specific attributes to restrict or lock all available options.</div><div class="a" style="left:756px;top:472px;width:27px;height:27px;background:#007cba;border-radius:3px"></div><div class="a" style="left:762px;top:484.5px;width:15px;height:2.5px;background:#fff"></div><div class="t" style="left:799.86px;top:477.36px;font-size:18.00px;letter-spacing:0.790px;color:#1e1e1e;-webkit-text-stroke:0.50px #1e1e1e">Lock all</div><div class="a" style="left:799.5px;top:535px;width:27px;height:27px;background:#007cba;border-radius:3px"></div><svg class="a" style="left:796.0px;top:531.5px" width="33" height="33" viewBox="0 0 24 24"><path fill="#fff" d="M16.7 7.1l-6.3 8.5-3.3-2.5-.9 1.2 4.5 3.4L17.9 8z"/></svg><div class="t" style="left:842.56px;top:541.66px;font-size:18.00px;letter-spacing:0.289px;color:#333333;-webkit-text-stroke:0.20px #333333">Disable movement</div><svg class="a" style="left:1243.0px;top:532.0px" width="33" height="33" viewBox="0 0 24 24"><path fill="#1e1e1e" d="M17 10h-1.2V7c0-2.1-1.7-3.8-3.8-3.8-2.1 0-3.8 1.7-3.8 3.8v3H7c-.6 0-1 .4-1 1v8c0 .6.4 1 1 1h10c.6 0 1-.4 1-1v-8c0-.6-.4-1-1-1zm-2.8 0H9.8V7c0-1.2 1-2.2 2.2-2.2s2.2 1 2.2 2.2v3z"/></svg><div class="a" style="left:799.5px;top:601px;width:27px;height:27px;border:1.5px solid #1e1e1e;border-radius:3px;background:#fff"></div><div class="t" style="left:842.56px;top:606.56px;font-size:18.00px;letter-spacing:0.250px;color:#333333;-webkit-text-stroke:0.20px #333333">Prevent removal</div><svg class="a" style="left:1243.0px;top:598.0px" width="33" height="33" viewBox="0 0 24 24"><path fill="#1e1e1e" d="M17 10h-1.2V7c0-2.1-1.7-3.8-3.8-3.8-2.1 0-3.8 1.7-3.8 3.8h1.5c0-1.2 1-2.2 2.2-2.2s2.2 1 2.2 2.2v3H7c-.6 0-1 .4-1 1v8c0 .6.4 1 1 1h10c.6 0 1-.4 1-1v-8c0-.6-.4-1-1-1z"/></svg><div class="t" style="left:1127.10px;top:698.06px;font-size:18.00px;letter-spacing:0.398px;color:#007cba;-webkit-text-stroke:0.20px #007cba">Cancel</div><div class="a" style="left:1212px;top:680px;width:80px;height:49px;background:#007cba;border-radius:3px"></div><div class="t" style="left:1229.00px;top:696.36px;font-size:18.00px;letter-spacing:0.243px;color:#fff;-webkit-text-stroke:0.20px #fff">Apply</div>
</body></html>
